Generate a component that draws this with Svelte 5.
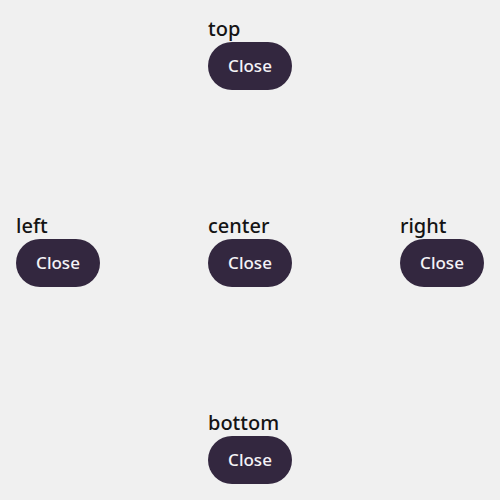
<script>
  const positions = ['top', 'left', 'center', 'right', 'bottom'];
</script>

<main>
  {#each positions as position}
    <section class={position} aria-labelledby={`title-${position}`}>
      <h2 id={`title-${position}`}>{position}</h2>
      <button type="button">Close</button>
    </section>
  {/each}
</main>

<style>
  :global(body) {
    margin: 0;
    background: #f0f0f0;
  }

  main {
    box-sizing: border-box;
    min-height: 100vh;
    padding: 16px;
    display: grid;
    grid-template: "a top b" auto "left center right" 1fr "c bottom d" auto / 1fr auto 1fr;
    align-items: center;
    font-family: "Noto Sans", sans-serif;
  }

  .top { grid-area: top; }
  .left { grid-area: left; justify-self: start; }
  .center { grid-area: center; }
  .right { grid-area: right; justify-self: end; }
  .bottom { grid-area: bottom; }

  section {
    display: flex;
    flex-direction: column;
    align-items: flex-start;
  }

  h2 {
    margin: 0;
    font-size: 20px;
    line-height: 26px;
    font-weight: 500;
    color: #141414;
  }

  button {
    min-width: 84px;
    border: 0;
    border-radius: 24px;
    padding: 12px 20px;
    background: #33273f;
    color: #f5f3f7;
    font: 500 17px/24px "Noto Sans", sans-serif;
    cursor: pointer;
  }
</style>
